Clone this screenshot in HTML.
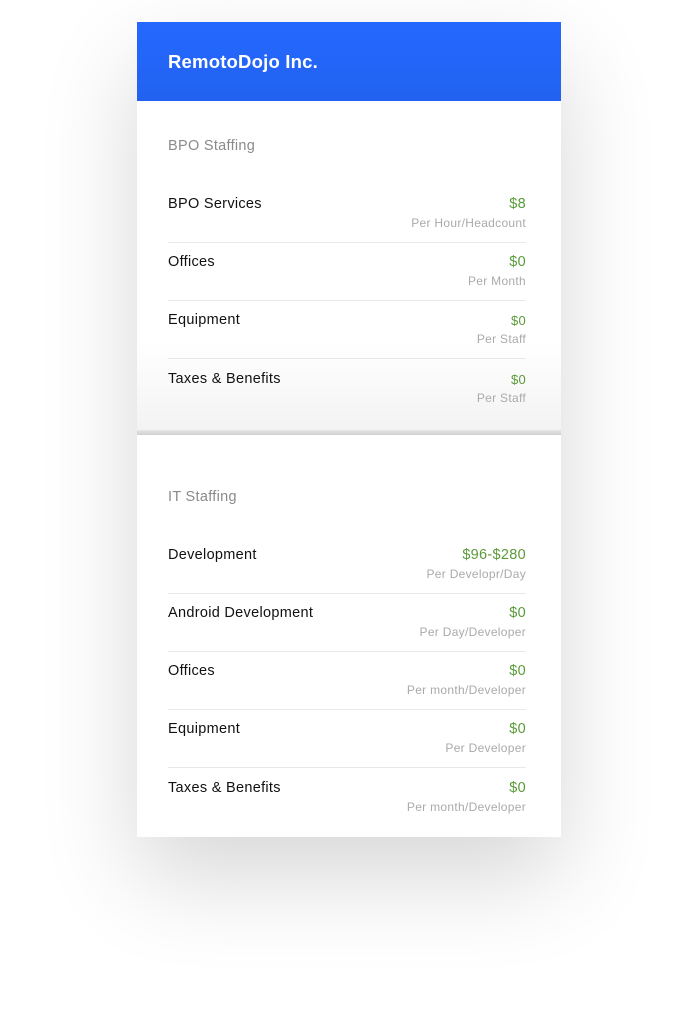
<!DOCTYPE html>
<html><head><style>
body{margin:0;width:698px;height:1011px;background:#fff;font-family:"Liberation Sans",sans-serif;position:relative;overflow:hidden}
.card{position:absolute;left:137px;top:22px;width:424px;height:815px;box-shadow:0 40px 90px rgba(0,0,0,.16)}
.hd{position:absolute;left:137px;top:22px;width:424px;height:79px;background:linear-gradient(180deg,#2468ff,#2262f0)}
.hd span{position:absolute;left:31px;top:29px;color:#fff;font-size:18.5px;font-weight:bold;letter-spacing:.2px}
.s1{position:absolute;left:137px;top:101px;width:424px;height:330px;background:linear-gradient(180deg,#fff 0,#fff 240px,#f3f3f3 330px)}
.gap{position:absolute;left:137px;top:430px;width:424px;height:5px;background:linear-gradient(180deg,#e6e6e6,#d0d0d0)}
.s2{position:absolute;left:137px;top:435px;width:424px;height:402px;background:#fff}
.t{position:absolute;left:168px;font-size:14.5px;color:#8a8a8a;letter-spacing:.3px}
.r{position:absolute;left:168px;width:358px;height:58px}
.r .n{position:absolute;left:0;top:0;font-size:14.5px;color:#111;letter-spacing:.3px}
.r .v{position:absolute;right:0;top:0;font-size:14.5px;color:#5a9a3a;letter-spacing:.3px}
.r .v.sm{font-size:13px;top:1px}
.r .s{position:absolute;right:0;top:20px;font-size:12px;color:#aaa;letter-spacing:.3px}
.r .d{position:absolute;left:0;right:0;top:46px;height:1px;background:#e8e8e8}
</style></head><body>
<div class="card"></div>
<div class="hd"><span>RemotoDojo Inc.</span></div>
<div class="s1"></div><div class="gap"></div><div class="s2"></div>
<div class="t" style="top:138px">BPO Staffing</div>
<div class="r" style="top:196px"><div class="n">BPO Services</div><div class="v">$8</div><div class="s">Per Hour/Headcount</div><div class="d"></div></div>
<div class="r" style="top:254px"><div class="n">Offices</div><div class="v">$0</div><div class="s">Per Month</div><div class="d"></div></div>
<div class="r" style="top:312px"><div class="n">Equipment</div><div class="v sm">$0</div><div class="s">Per Staff</div><div class="d"></div></div>
<div class="r" style="top:371px"><div class="n">Taxes &amp; Benefits</div><div class="v sm">$0</div><div class="s">Per Staff</div></div>
<div class="t" style="top:489px">IT Staffing</div>
<div class="r" style="top:547px"><div class="n">Development</div><div class="v">$96-$280</div><div class="s">Per Developr/Day</div><div class="d"></div></div>
<div class="r" style="top:605px"><div class="n">Android Development</div><div class="v">$0</div><div class="s">Per Day/Developer</div><div class="d"></div></div>
<div class="r" style="top:663px"><div class="n">Offices</div><div class="v">$0</div><div class="s">Per month/Developer</div><div class="d"></div></div>
<div class="r" style="top:721px"><div class="n">Equipment</div><div class="v">$0</div><div class="s">Per Developer</div><div class="d"></div></div>
<div class="r" style="top:780px"><div class="n">Taxes &amp; Benefits</div><div class="v">$0</div><div class="s">Per month/Developer</div></div>
</body></html>
